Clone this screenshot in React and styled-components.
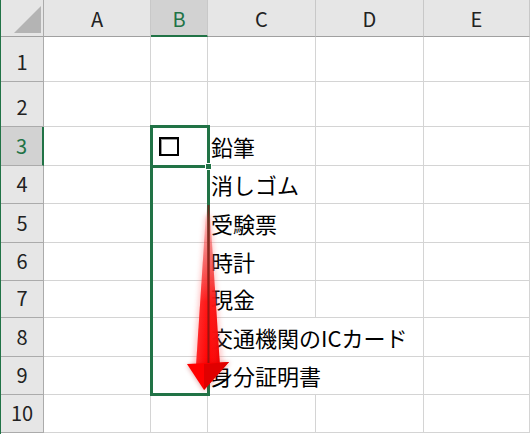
import React from "react";
import styled, { createGlobalStyle, css } from "styled-components";

const GREEN = "#217346";

const GlobalStyle = createGlobalStyle`
  html, body { margin: 0; padding: 0; background: #fff; }
  body { font-family: "Noto Sans CJK JP", "Noto Sans", sans-serif; }
`;

const Sheet = styled.div`
  position: relative;
  width: 530px;
  height: 434px;
  box-sizing: border-box;
  border-left: 1px solid ${GREEN};
  overflow: hidden;
  background: #fff;
  display: grid;
  grid-template-columns: 43px 107px 57px 108px 108px 106px;
  grid-template-rows: 37px 45px 45px 39px 38px 39px 38px 37px 39px 38px 38px;
  align-content: start;
`;

const Corner = styled.div`
  background: #e6e6e6;
  border-right: 1px solid #ababab;
  border-bottom: 1px solid #a0a0a0;
  display: flex;
  justify-content: flex-end;
  align-items: flex-end;
  padding: 0 2px 3px 0;
`;

const Triangle = styled.div`
  width: 27px;
  height: 27px;
  background: #b4b4b4;
  clip-path: polygon(100% 0, 100% 100%, 0 100%);
`;

const ColHead = styled.div`
  background: #e6e6e6;
  border-right: 1px solid #c8c8c8;
  border-bottom: 1px solid #a0a0a0;
  display: flex;
  align-items: center;
  justify-content: center;
  padding-top: 1px;
  font-size: 20px;
  color: #222;
  ${(p) =>
    p.active &&
    css`
      background: #d2d2d2;
      border-bottom: 2px solid ${GREEN};
      color: ${GREEN};
    `}
`;

const RowHead = styled.div`
  background: #e6e6e6;
  border-right: 1px solid #ababab;
  border-bottom: 1px solid #ababab;
  display: flex;
  align-items: flex-end;
  justify-content: center;
  padding-bottom: 9px;
  font-size: 20px;
  line-height: 1;
  color: #222;
  ${(p) =>
    p.active &&
    css`
      background: #d2d2d2;
      border-right: 2px solid ${GREEN};
      color: ${GREEN};
    `}
`;

const Cell = styled.div`
  border-right: ${(p) => (p.spill ? "none" : "1px solid #d4d4d4")};
  border-bottom: 1px solid #d4d4d4;
  display: flex;
  align-items: flex-end;
  padding: 0 0 5px 3px;
  font-size: 22px;
  line-height: 1.25;
  color: #000;
  white-space: nowrap;
  overflow: visible;
  min-width: 0;
`;

const CheckBox = styled.span`
  display: block;
  width: 16px;
  height: 15px;
  border: 2px solid #000;
  box-shadow: inset 1px 1px 0 #9a9a9a;
  margin: 0 0 4px 5px;
`;

const Selection = styled.div`
  position: absolute;
  left: 149px;
  top: 125px;
  width: 60px;
  height: 271px;
  box-sizing: border-box;
  border: 3px solid ${GREEN};
  pointer-events: none;
`;

const ActiveEdge = styled.div`
  position: absolute;
  left: 149px;
  top: 165px;
  width: 60px;
  height: 3px;
  background: ${GREEN};
`;

const FillHandle = styled.div`
  position: absolute;
  left: 205px;
  top: 164px;
  width: 5px;
  height: 5px;
  background: ${GREEN};
  outline: 1px solid #fff;
`;

const Arrow = styled.svg`
  position: absolute;
  left: 0;
  top: 0;
  pointer-events: none;
`;

const columns = ["A", "B", "C", "D", "E"];

const rows = [
  { n: 1 },
  { n: 2 },
  { n: 3, item: "鉛筆", box: true },
  { n: 4, item: "消しゴム" },
  { n: 5, item: "受験票" },
  { n: 6, item: "時計" },
  { n: 7, item: "現金" },
  { n: 8, item: "交通機関のICカード", spill: true },
  { n: 9, item: "身分証明書", spill: true },
  { n: 10 },
];

const App = () => {
  return (
    <>
      <GlobalStyle />
      <Sheet>
        <Corner>
          <Triangle />
        </Corner>
        {columns.map((c) => (
          <ColHead key={c} active={c === "B"}>
            {c}
          </ColHead>
        ))}

        {rows.map((r) => (
          <React.Fragment key={r.n}>
            <RowHead active={r.n === 3}>{r.n}</RowHead>
            <Cell />
            <Cell>{r.box && <CheckBox />}</Cell>
            <Cell spill={r.spill}>{r.item}</Cell>
            <Cell />
            <Cell />
          </React.Fragment>
        ))}

        <Selection />
        <ActiveEdge />
        <FillHandle />

        {/* 赤い矢印 */}
        <Arrow width="530" height="434" viewBox="0 0 530 434">
          <defs>
            <linearGradient id="shaft" x1="0" y1="205" x2="0" y2="366" gradientUnits="userSpaceOnUse">
              <stop offset="0" stopColor="#ff2020" stopOpacity="0" />
              <stop offset="0.3" stopColor="#f03030" stopOpacity="0.6" />
              <stop offset="0.6" stopColor="#ff0a0a" stopOpacity="0.95" />
              <stop offset="1" stopColor="#ff0000" stopOpacity="1" />
            </linearGradient>
            <linearGradient id="side" x1="195" y1="0" x2="219" y2="0" gradientUnits="userSpaceOnUse">
              <stop offset="0" stopColor="#ffffff" stopOpacity="0.15" />
              <stop offset="0.5" stopColor="#ffffff" stopOpacity="0" />
              <stop offset="1" stopColor="#800000" stopOpacity="0.15" />
            </linearGradient>
            <filter id="blur" x="-50%" y="-20%" width="200%" height="140%">
              <feGaussianBlur stdDeviation="2.5" />
            </filter>
          </defs>
          <polygon points="204,215 210,215 222,366 192,366" fill="#ff6b6b" opacity="0.35" filter="url(#blur)" />
          <polygon points="205.5,205 208.5,205 219,366 195,366" fill="url(#shaft)" />
          <polygon points="205.5,205 208.5,205 219,366 195,366" fill="url(#side)" />
          <line x1="207.5" y1="205" x2="207.5" y2="364" stroke="#7a1a14" strokeOpacity="0.75" strokeWidth="2" />
          <polygon points="186,365 229,362 203,391" fill="#b00000" opacity="0.35" filter="url(#blur)" />
          <polygon points="186,364 228,362 203,390" fill="#ff0000" />
          <polygon points="203,364 228,362 203,390" fill="#e00000" />
        </Arrow>
      </Sheet>
    </>
  );
};

export default App;
